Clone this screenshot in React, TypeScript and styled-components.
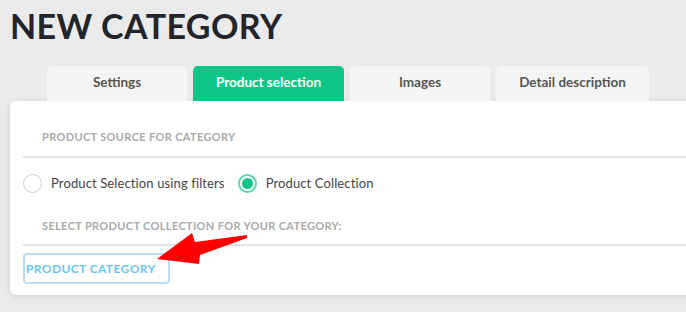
import React from "react";
import styled, { createGlobalStyle } from "styled-components";

const Global = createGlobalStyle`
  html, body { margin: 0; padding: 0; }
  body {
    background: #ebebeb;
    font-family: "Lato", "Noto Sans", sans-serif;
    overflow: hidden;
    width: 686px;
    height: 312px;
  }
`;

const Page = styled.div`
  position: relative;
  padding: 9px 0 0 10px;
  height: 312px;
  box-sizing: border-box;
  overflow: hidden;
`;

const Title = styled.h1`
  margin: 0;
  font-size: 34px;
  line-height: 34px;
  font-weight: 700;
  color: #23252b;
  letter-spacing: 0.4px;
`;

const Tabs = styled.div`
  display: flex;
  gap: 6px;
  margin: 23px 0 0 37px;
  height: 35px;
`;

const Tab = styled.div<{ $active?: boolean; $w: number }>`
  width: ${(p) => p.$w}px;
  display: flex;
  align-items: center;
  justify-content: center;
  padding-bottom: 3px;
  box-sizing: border-box;
  border-radius: 5px 5px 0 0;
  background: ${(p) => (p.$active ? "#0cc685" : "#f5f5f5")};
  color: ${(p) => (p.$active ? "#ffffff" : "#555555")};
  font-size: 13.5px;
  font-weight: 700;
`;

const Card = styled.div`
  background: #ffffff;
  border-radius: 6px;
  width: 720px;
  height: 194px;
  box-shadow: 0 1px 6px rgba(0, 0, 0, 0.12);
  padding: 0 0 0 13px;
  box-sizing: border-box;
`;

const SectionLabel = styled.div`
  font-size: 11px;
  font-weight: 700;
  color: #aaaaaa;
  text-transform: uppercase;
  padding-left: 19px;
  letter-spacing: 0.35px;
`;

const SourceLabel = styled(SectionLabel)`
  padding-top: 29px;
  height: 26px;
`;

const CollectionLabel = styled(SectionLabel)`
  padding-top: 12px;
  height: 25px;
`;

const Rule = styled.div`
  height: 2px;
  background: #e3e3e3;
`;

const RadioRow = styled.div`
  display: flex;
  align-items: center;
  height: 49px;
  padding-top: 1px;
  box-sizing: border-box;
`;

const RadioOption = styled.label`
  display: flex;
  align-items: center;
  gap: 9px;
  margin-right: 13px;
  font-size: 13px;
  letter-spacing: 0.12px;
  color: #444444;
`;

const RadioCircle = styled.span<{ $checked?: boolean }>`
  width: 19px;
  height: 19px;
  box-sizing: border-box;
  border-radius: 50%;
  border: ${(p) => (p.$checked ? "2px solid #5ed8ae" : "1px solid #cfcfcf")};
  display: flex;
  align-items: center;
  justify-content: center;
  background: #fff;
  &::after {
    content: "";
    width: 11px;
    height: 11px;
    border-radius: 50%;
    background: ${(p) => (p.$checked ? "#0cc685" : "transparent")};
  }
`;

const CategoryButton = styled.button`
  margin-top: 7px;
  width: 147px;
  height: 31px;
  box-sizing: border-box;
  border: 2px solid #bcdcf5;
  border-radius: 4px;
  background: #fff;
  color: #6cc6f2;
  font-family: "Lato", "Noto Sans", sans-serif;
  font-size: 12px;
  font-weight: 700;
  text-align: left;
  padding: 0 0 0 1px;
  letter-spacing: 0.4px;
`;

const Arrow = styled.svg`
  position: absolute;
  left: 0;
  top: 0;
  pointer-events: none;
`;

export default function App() {
  return (
    <>
      <Global />
      <Page>
        <Title>NEW CATEGORY</Title>
        <Tabs>
          <Tab $w={140}>Settings</Tab>
          <Tab $w={151} $active>
            Product selection
          </Tab>
          <Tab $w={140}>Images</Tab>
          <Tab $w={153}>Detail description</Tab>
        </Tabs>
        <Card>
          <SourceLabel>Product source for category</SourceLabel>
          <Rule />
          <RadioRow>
            <RadioOption>
              <RadioCircle />
              Product Selection using filters
            </RadioOption>
            <RadioOption>
              <RadioCircle $checked />
              Product Collection
            </RadioOption>
          </RadioRow>
          <CollectionLabel>Select product collection for your category:</CollectionLabel>
          <Rule />
          <CategoryButton>PRODUCT CATEGORY</CategoryButton>
        </Card>
        <Arrow width="686" height="312" viewBox="0 0 686 312">
          <polygon
            points="157,259 192,233 195,242 247,235 247,238 200,255 199,264"
            fill="#ff0000"
          />
        </Arrow>
      </Page>
    </>
  );
}
